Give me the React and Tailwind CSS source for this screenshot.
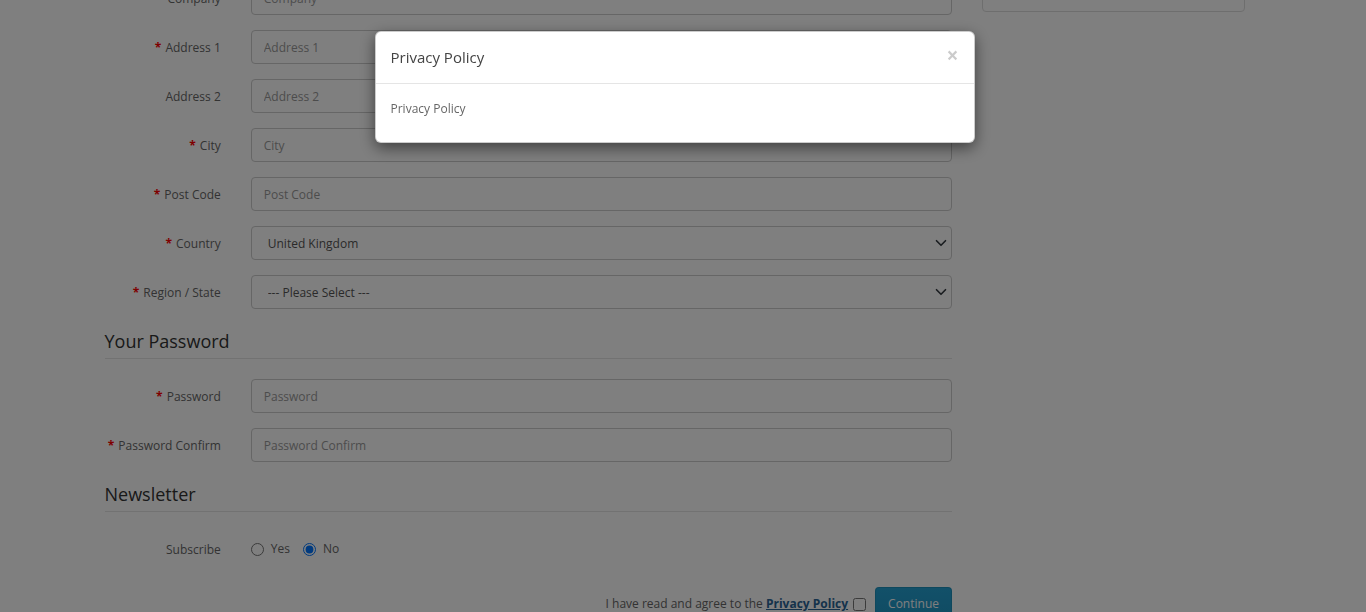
import React from "react";

const font = { fontFamily: "'Open Sans', 'Liberation Sans', sans-serif" };

const Chevron = () => (
  <svg
    className="pointer-events-none absolute right-[5px] top-1/2 -translate-y-1/2"
    width="12"
    height="12"
    viewBox="0 0 16 16"
    fill="none"
    stroke="#343a40"
    strokeWidth="2.2"
    strokeLinecap="round"
    strokeLinejoin="round"
  >
    <path d="m2 5 6 6 6-6" />
  </svg>
);

const FormRow = ({ label, required, children }) => (
  <div className="-mx-[15px] mb-[15px] flex">
    <label className="flex h-[34px] w-[146.25px] shrink-0 items-center justify-end px-[15px] pt-[1px] text-[12px] text-[#666]">
      {required && <span className="mr-[4px] font-bold text-[#f00]">*</span>}
      {label}
    </label>
    <div className="flex-1 px-[15px]">{children}</div>
  </div>
);

const Input = ({ placeholder, type = "text" }) => (
  <input
    type={type}
    placeholder={placeholder}
    className="block h-[34px] w-full rounded-[4px] border border-[#ccc] bg-white px-[12px] text-[12px] text-[#555] outline-none placeholder:text-[#999]"
  />
);

const Select = ({ value }) => (
  <div className="relative">
    <select
      defaultValue={value}
      className="block h-[34px] w-full appearance-none rounded-[4px] border border-[#ccc] bg-white pl-[16px] pt-[1px] text-[12px] text-[#555] outline-none"
    >
      <option>{value}</option>
    </select>
    <Chevron />
  </div>
);

const Legend = ({ children }) => (
  <div className="mb-[20px] flex h-[35px] items-center border-b border-[#e5e5e5] text-[18px] text-[#333]">
    {children}
  </div>
);

export default function App() {
  return (
    <div style={font} className="relative h-[612px] overflow-hidden bg-white pr-[17px]">
      <div className="mx-auto mt-[-19px] w-[1170px] px-[15px]">
        <div className="-mx-[15px] flex">
          {/* CONTENT */}
          <div className="w-[877.5px] px-[15px]">
            <FormRow label="Company">
              <Input placeholder="Company" />
            </FormRow>
            <FormRow label="Address 1" required>
              <Input placeholder="Address 1" />
            </FormRow>
            <FormRow label="Address 2">
              <Input placeholder="Address 2" />
            </FormRow>
            <FormRow label="City" required>
              <Input placeholder="City" />
            </FormRow>
            <FormRow label="Post Code" required>
              <Input placeholder="Post Code" />
            </FormRow>
            <FormRow label="Country" required>
              <Select value="United Kingdom" />
            </FormRow>
            <FormRow label="Region / State" required>
              <Select value="--- Please Select ---" />
            </FormRow>

            <Legend>Your Password</Legend>
            <FormRow label="Password" required>
              <Input placeholder="Password" type="password" />
            </FormRow>
            <FormRow label="Password Confirm" required>
              <Input placeholder="Password Confirm" type="password" />
            </FormRow>

            <Legend>Newsletter</Legend>
            <FormRow label="Subscribe">
              <div className="flex h-[34px] items-center text-[12px] text-[#666]">
                <label className="flex items-center">
                  <input type="radio" name="newsletter" className="m-0 h-[13px] w-[13px]" />
                  <span className="ml-[7px] mr-[13px]">Yes</span>
                </label>
                <label className="flex items-center">
                  <input type="radio" name="newsletter" defaultChecked className="m-0 h-[13px] w-[13px]" />
                  <span className="ml-[7px]">No</span>
                </label>
              </div>
            </FormRow>

            {/* BUTTONS */}
            <div className="mt-[21px] flex items-center justify-end text-[12px] text-[#666]">
              <span>I have read and agree to the&nbsp;</span>
              <a href="#" className="font-bold text-[#2a6496] underline">
                Privacy Policy
              </a>
              <input type="checkbox" className="ml-[5px] h-[13px] w-[13px]" />
              <button className="ml-[9px] h-[34px] rounded-[4px] border border-[#1f90bb] border-b-[#145e7a] bg-gradient-to-b from-[#24a1d3] to-[#2096c4] px-[12px] text-[12px] text-white">
                Continue
              </button>
            </div>
          </div>

          {/* SIDEBAR */}
          <div className="w-[292.5px] px-[15px]">
            <div className="h-[31px] rounded-[4px] border border-[#ddd] bg-white" />
          </div>
        </div>
      </div>

      {/* MODAL */}
      <div className="fixed inset-0 z-10 bg-black/50 pr-[17px]">
        <div className="mx-auto mt-[31px] w-[600px] rounded-[6px] border border-black/20 bg-white shadow-[0_5px_15px_rgba(0,0,0,0.5)]">
          <div className="flex items-start justify-between border-b border-[#e5e5e5] px-[15px] pb-[15px] pt-[15px]">
            <h4 className="text-[15px] leading-[21px] text-[#444]">Privacy Policy</h4>
            <button className="mt-[-2px] text-[21px] font-bold leading-none text-black opacity-20">×</button>
          </div>
          <div className="px-[15px] pb-[15px] pt-[16px] text-[12px] text-[#666]">
            <p className="mb-[10px] leading-[17px]">Privacy Policy</p>
          </div>
        </div>
      </div>
    </div>
  );
}
